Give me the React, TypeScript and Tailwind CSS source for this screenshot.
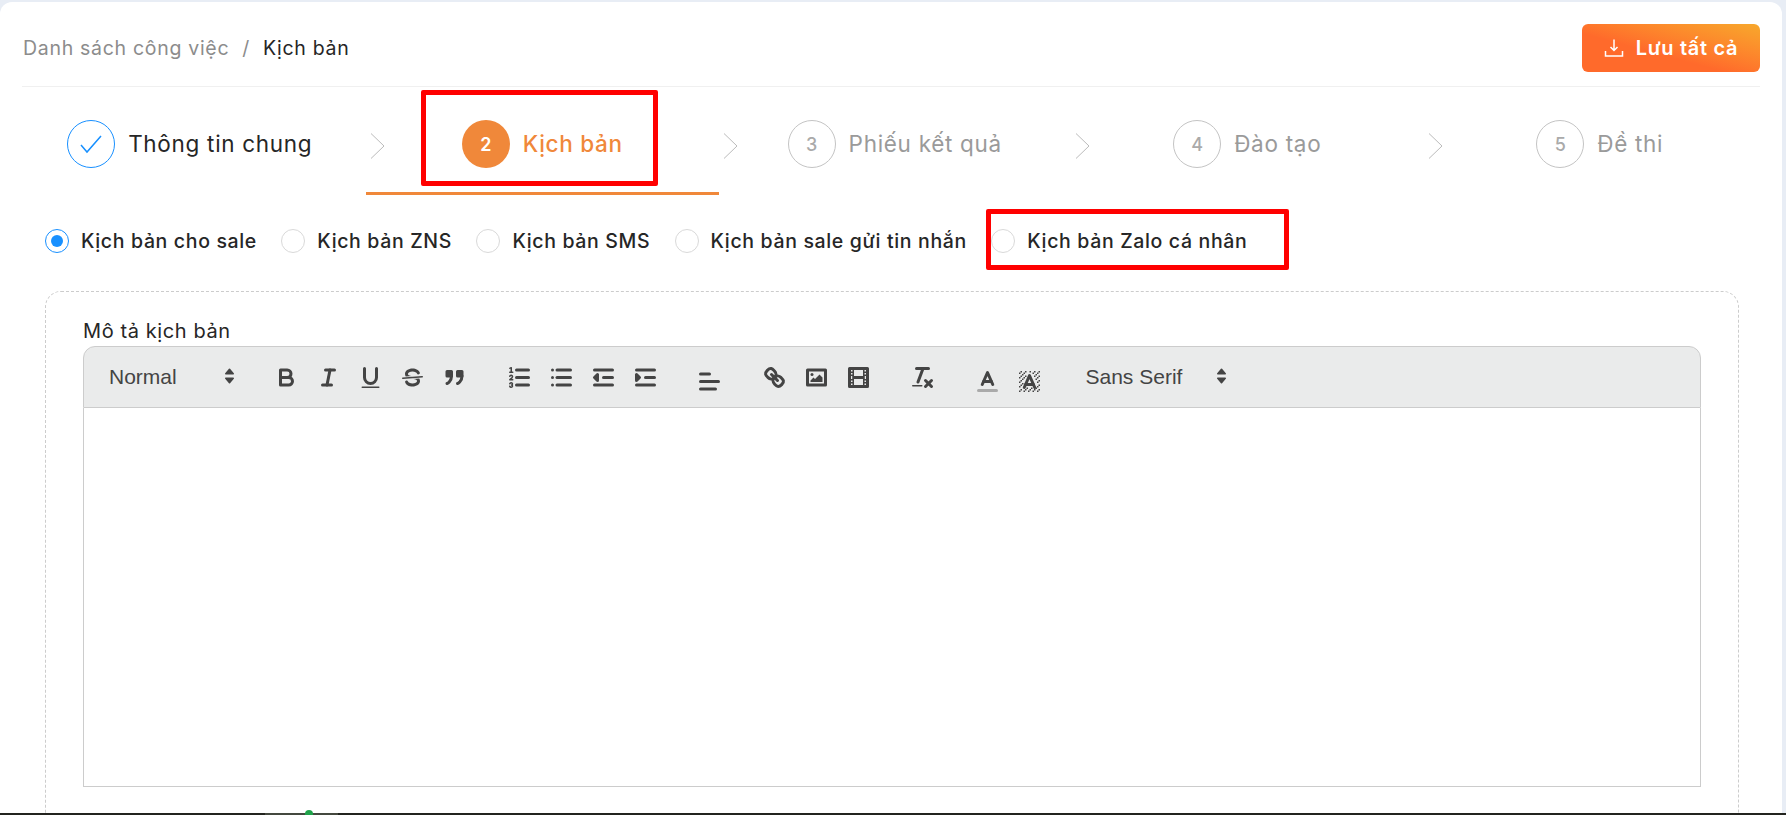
import React from "react";

const font = "font-['Inter','Noto_Sans',sans-serif]";

const Icon: React.FC<{ children: React.ReactNode }> = ({ children }) => (
  <svg
    viewBox="0 0 18 18"
    className="w-[27px] h-[27px] fill-none stroke-[#444] stroke-2 [stroke-linecap:round] [stroke-linejoin:round]"
  >
    {children}
  </svg>
);

const thin = { strokeWidth: 1 };
const solid = { fill: "#444", stroke: "none" };
const both = { fill: "#444" };

const dither = [
  [4, 4], [2, 6], [3, 5], [4, 7], [2, 12], [2, 9], [2, 15], [3, 8], [12, 2], [11, 3],
  [2, 3], [6, 2], [3, 2], [5, 3], [9, 2], [15, 14], [13, 7], [15, 5], [14, 6], [15, 8],
  [14, 9], [14, 3], [15, 2], [12, 5], [13, 4], [9, 14], [8, 15], [5, 15], [11, 15],
  [5, 6], [6, 5], [3, 11], [4, 10], [7, 13], [6, 14], [3, 14], [14, 12], [13, 13], [15, 11], [12, 14], [14, 15], [10, 13],
];

// align, color and background sit lower in the toolbar (they are pickers)
const lowered = [2, 5];

const groups: React.ReactNode[][] = [
  [
    <>
      <path d="M5,4H9.5A2.5,2.5,0,0,1,12,6.5v0A2.5,2.5,0,0,1,9.5,9H5A0,0,0,0,1,5,9V4A0,0,0,0,1,5,4Z" />
      <path d="M5,9h5.5A2.5,2.5,0,0,1,13,11.5v0A2.5,2.5,0,0,1,10.5,14H5a0,0,0,0,1,0,0V9A0,0,0,0,1,5,9Z" />
    </>,
    <>
      <line x1="7" x2="13" y1="4" y2="4" />
      <line x1="5" x2="11" y1="14" y2="14" />
      <line x1="8" x2="10" y1="14" y2="4" />
    </>,
    <>
      <path d="M5,3V9a4.012,4.012,0,0,0,4,4H9a4.012,4.012,0,0,0,4-4V3" />
      <rect {...solid} height="1" rx="0.5" ry="0.5" width="12" x="3" y="15" />
    </>,
    <>
      <line {...thin} x1="15.5" x2="2.5" y1="8.5" y2="9.5" />
      <path {...solid} d="M9.007,8C6.542,7.791,6,7.519,6,6.5,6,5.792,7.283,5,9,5c1.571,0,2.765.679,2.969,1.309a1,1,0,0,0,1.9-.617C13.356,4.106,11.354,3,9,3,6.2,3,4,4.538,4,6.5a3.2,3.2,0,0,0,.5,1.843Z" />
      <path {...solid} d="M8.984,10C11.457,10.208,12,10.479,12,11.5c0,.708-1.283,1.5-3,1.5-1.571,0-2.765-.679-2.969-1.309a1,1,0,1,0-1.9.617C4.644,13.894,6.646,15,9,15c2.8,0,5-1.538,5-3.5a3.2,3.2,0,0,0-.5-1.843Z" />
    </>,
    <>
      <rect {...both} height="3" width="3" x="4" y="5" />
      <rect {...both} height="3" width="3" x="11" y="5" />
      <path {...both} d="M7,8c0,4.031-3,5-3,5" />
      <path {...both} d="M14,8c0,4.031-3,5-3,5" />
    </>,
  ],
  [
    <>
      <line x1="7" x2="15" y1="4" y2="4" />
      <line x1="7" x2="15" y1="9" y2="9" />
      <line x1="7" x2="15" y1="14" y2="14" />
      <line {...thin} x1="2.5" x2="4.5" y1="5.5" y2="5.5" />
      <path {...solid} d="M3.5,6A0.5,0.5,0,0,1,3,5.5V3.085l-0.276.138A0.5,0.5,0,0,1,2.053,3c-0.124-.247-0.023-0.324.224-0.447l1-.5A0.5,0.5,0,0,1,4,2.5v3A0.5,0.5,0,0,1,3.5,6Z" />
      <path {...thin} d="M4.5,10.5h-2c0-.234,1.85-1.076,1.85-2.234A0.959,0.959,0,0,0,2.5,8.156" />
      <path {...thin} d="M2.5,14.846a0.959,0.959,0,0,0,1.85-.109A0.7,0.7,0,0,0,3.75,14a0.688,0.688,0,0,0,.6-0.736,0.959,0.959,0,0,0-1.85-.109" />
    </>,
    <>
      <line x1="6" x2="15" y1="4" y2="4" />
      <line x1="6" x2="15" y1="9" y2="9" />
      <line x1="6" x2="15" y1="14" y2="14" />
      <line x1="3" x2="3" y1="4" y2="4" />
      <line x1="3" x2="3" y1="9" y2="9" />
      <line x1="3" x2="3" y1="14" y2="14" />
    </>,
    <>
      <line x1="3" x2="15" y1="14" y2="14" />
      <line x1="3" x2="15" y1="4" y2="4" />
      <line x1="9" x2="15" y1="9" y2="9" />
      <polyline {...both} points="5 7 5 11 3 9 5 7" />
    </>,
    <>
      <line x1="3" x2="15" y1="14" y2="14" />
      <line x1="3" x2="15" y1="4" y2="4" />
      <line x1="9" x2="15" y1="9" y2="9" />
      <polyline {...both} points="3 7 3 11 5 9 3 7" />
    </>,
  ],
  [
    <>
      <line x1="3" x2="15" y1="9" y2="9" />
      <line x1="3" x2="13" y1="14" y2="14" />
      <line x1="3" x2="9" y1="4" y2="4" />
    </>,
  ],
  [
    <>
      <line x1="7" x2="11" y1="7" y2="11" />
      <path d="M8.9,4.577a3.476,3.476,0,0,1,.36,4.679A3.476,3.476,0,0,1,4.577,8.9C3.185,7.5,2.035,6.4,4.217,4.217S7.5,3.185,8.9,4.577Z" />
      <path d="M13.423,9.1a3.476,3.476,0,0,0-4.679-.36,3.476,3.476,0,0,0,.36,4.679c1.392,1.392,2.5,2.542,4.679.36S14.815,10.5,13.423,9.1Z" />
    </>,
    <>
      <rect height="10" width="12" x="3" y="4" />
      <circle {...solid} cx="6" cy="7" r="1" />
      <polyline {...solid} points="5 12 5 11 7 9 8 10 11 7 13 9 13 12 5 12" />
    </>,
    <>
      <rect height="12" width="12" x="3" y="3" />
      <rect {...solid} height="12" width="1" x="5" y="3" />
      <rect {...solid} height="12" width="1" x="12" y="3" />
      <rect {...solid} height="2" width="8" x="5" y="8" />
      {[5, 7, 10, 12].map((y) => (
        <React.Fragment key={y}>
          <rect {...solid} height="1" width="3" x="3" y={y} />
          <rect {...solid} height="1" width="3" x="12" y={y} />
        </React.Fragment>
      ))}
    </>,
  ],
  [
    <>
      <line x1="5" x2="13" y1="3" y2="3" />
      <line x1="6" x2="9.35" y1="12" y2="3" />
      <line x1="11" x2="15" y1="11" y2="15" />
      <line x1="15" x2="11" y1="11" y2="15" />
      <rect {...solid} height="1" rx="0.5" ry="0.5" width="7" x="2" y="14" />
    </>,
  ],
  [
    <>
      <line stroke="#aaa" x1="3" x2="15" y1="15" y2="15" />
      <polyline points="5.5 11 9 3 12.5 11" />
      <line x1="11.63" x2="6.38" y1="9" y2="9" />
    </>,
    <>
      {dither.map(([x, y]) => (
        <rect key={`${x}-${y}`} {...solid} height="1" width="1" x={x} y={y} />
      ))}
      <polyline points="5.5 13 9 5 12.5 13" />
      <line x1="11.63" x2="6.38" y1="11" y2="11" />
    </>,
  ],
];

const Picker: React.FC<{ label: string; width: string }> = ({ label, width }) => (
  <div className={`${width} h-[36px] relative flex items-center pl-[13px] text-[21px] text-[#444] font-['Liberation_Sans',Arial,sans-serif]`}>
    {label}
    <svg
      viewBox="0 0 18 18"
      className="absolute right-0 top-[5px] w-[27px] h-[27px] fill-[#444] stroke-[#444] stroke-1 [stroke-linejoin:round]"
    >
      <polygon points="6.5 9.5 9 12.5 11.5 9.5 6.5 9.5" />
      <polygon points="6.5 6.5 9 3.5 11.5 6.5 6.5 6.5" />
    </svg>
  </div>
);

const Toolbar = () => (
  <div className="h-[62px] flex items-center pl-[12px] bg-[#eaebeb] border border-[#ccc] rounded-t-[12px]">
    <Picker label="Normal" width="w-[147px]" />
    <div className="ml-[22.5px] flex gap-[22.5px]">
      {groups.map((group, i) => (
        <div key={i} className={`flex ${lowered.includes(i) ? "translate-y-[4px]" : ""}`}>
          {group.map((icon, j) => (
            <div key={j} className="w-[42px] h-[36px] flex items-center justify-center">
              <Icon>{icon}</Icon>
            </div>
          ))}
        </div>
      ))}
    </div>
    <div className="ml-[22.5px]">
      <Picker label="Sans Serif" width="w-[162px]" />
    </div>
  </div>
);

const steps = [
  { n: "1", label: "Thông tin chung", state: "done" },
  { n: "2", label: "Kịch bản", state: "active" },
  { n: "3", label: "Phiếu kết quả", state: "todo" },
  { n: "4", label: "Đào tạo", state: "todo" },
  { n: "5", label: "Đề thi", state: "todo" },
];

const radios = ["Kịch bản cho sale", "Kịch bản ZNS", "Kịch bản SMS", "Kịch bản sale gửi tin nhắn", "Kịch bản Zalo cá nhân"];

const Steps = () => (
  <div className="flex -ml-[8.5px] -mr-[16px] h-[108px]">
    {steps.map((s, i) => (
      <div
        key={s.n}
        className={`relative w-[352.5px] shrink-0 flex items-center justify-center gap-[13px] pt-[9px] border-b-[3px] ${
          s.state === "active" ? "border-[#f0883a]" : "border-transparent"
        }`}
      >
        {s.state === "done" && (
          <div className="w-[48px] h-[48px] rounded-full border border-[#1890ff] flex items-center justify-center">
            <svg viewBox="0 0 24 24" className="w-[24px] h-[24px] fill-none stroke-[#1890ff] stroke-[1.5]">
              <polyline points="2,13 8,20 22,4" />
            </svg>
          </div>
        )}
        {s.state === "active" && (
          <div className="w-[48px] h-[48px] rounded-full bg-[#f0883a] text-white text-[18px] font-semibold flex items-center justify-center">
            {s.n}
          </div>
        )}
        {s.state === "todo" && (
          <div className="w-[48px] h-[48px] rounded-full border border-[#c4c4c4] text-[#aaa] text-[18px] font-medium flex items-center justify-center">
            {s.n}
          </div>
        )}
        <span
          className={`text-[22.5px] tracking-[0.7px] ${
            s.state === "done" ? "text-[#262626]" : s.state === "active" ? "text-[#f0883a] font-medium" : "text-[#9a9a9a]"
          }`}
        >
          {s.label}
        </span>
        {i < 4 && (
          <svg viewBox="0 0 15 26" className="absolute -right-[19px] top-[46px] w-[15px] h-[26px] fill-none stroke-[#bbb]">
            <polyline points="1,0.5 14,13 1,25.5" />
          </svg>
        )}
        {s.state === "active" && (
          <div className="absolute left-[55px] top-[3px] w-[237px] h-[96px] border-[5px] border-[#ff0000] rounded-[2px]" />
        )}
      </div>
    ))}
  </div>
);

const Radios = () => (
  <div className="relative flex items-center gap-[24.4px] ml-[23px] mt-[34px] h-[24px]">
    {radios.map((r, i) => (
      <div key={r} className="relative flex items-center gap-[12px]">
        <span
          className={`w-[24px] h-[24px] rounded-full border flex items-center justify-center bg-white ${
            i === 0 ? "border-[#1890ff]" : "border-[#d9d9d9]"
          }`}
        >
          {i === 0 && <span className="w-[12px] h-[12px] rounded-full bg-[#1890ff]" />}
        </span>
        <span className="text-[19.5px] leading-[24px] tracking-[0.65px] font-medium text-[#262626] whitespace-nowrap">{r}</span>
        {i === 4 && (
          <div className="absolute -left-[5px] -top-[20px] w-[303px] h-[61px] border-[5px] border-[#ff0000] rounded-[2px]" />
        )}
      </div>
    ))}
  </div>
);

export default function App() {
  return (
    <div className={`h-[815px] overflow-hidden flex flex-col bg-[#e8edf5] pt-[2px] ${font}`}>
      <div className="flex-1 min-h-0 overflow-hidden mr-[4px] bg-white rounded-t-[12px] px-[22px]">
        <div className="h-[85px] flex items-center justify-between border-b border-[#f0f0f0]">
          <div className="flex items-center text-[19.5px] tracking-[0.7px] mt-[10px]">
            <span className="text-[#8c8c8c] ml-[1px]">Danh sách công việc</span>
            <span className="text-[#8c8c8c] mx-[13px]">/</span>
            <span className="text-[#262626]">Kịch bản</span>
          </div>
          <button className="w-[178px] h-[48px] mt-[7px] rounded-[6px] bg-linear-to-tr from-[#ff6a2b] from-40% to-[#f7a82c] text-white flex items-center justify-center gap-[12px] text-[20px] tracking-[0.7px] font-semibold">
            <svg viewBox="0 0 20 20" className="w-[20px] h-[20px] fill-none stroke-white stroke-[1.5]">
              <path d="M10 1.5v11M6.5 9l3.5 3.5L13.5 9M1.5 13v5h17v-5" />
            </svg>
            Lưu tất cả
          </button>
        </div>
        <Steps />
        <Radios />
        <div className="ml-[23px] mr-[21px] mt-[38px] h-[600px] border border-dashed border-[#ccc] rounded-[16px] px-[37px] pt-[26px]">
          <div className="h-[28px] text-[20px] tracking-[0.6px] text-[#262626] leading-[26px]">Mô tả kịch bản</div>
          <Toolbar />
          <div className="h-[379px] border-x border-b border-[#ccc] border-t-0" />
        </div>
      </div>
      <div className="relative h-[2px] shrink-0 flex bg-[#23241f]">
        <div className="ml-[265px] w-[73px] bg-[#44483f]" />
        <span className="absolute left-[305px] -top-[3px] w-[8px] h-[5px] rounded-t-full bg-[#1fa24a]" />
      </div>
    </div>
  );
}
